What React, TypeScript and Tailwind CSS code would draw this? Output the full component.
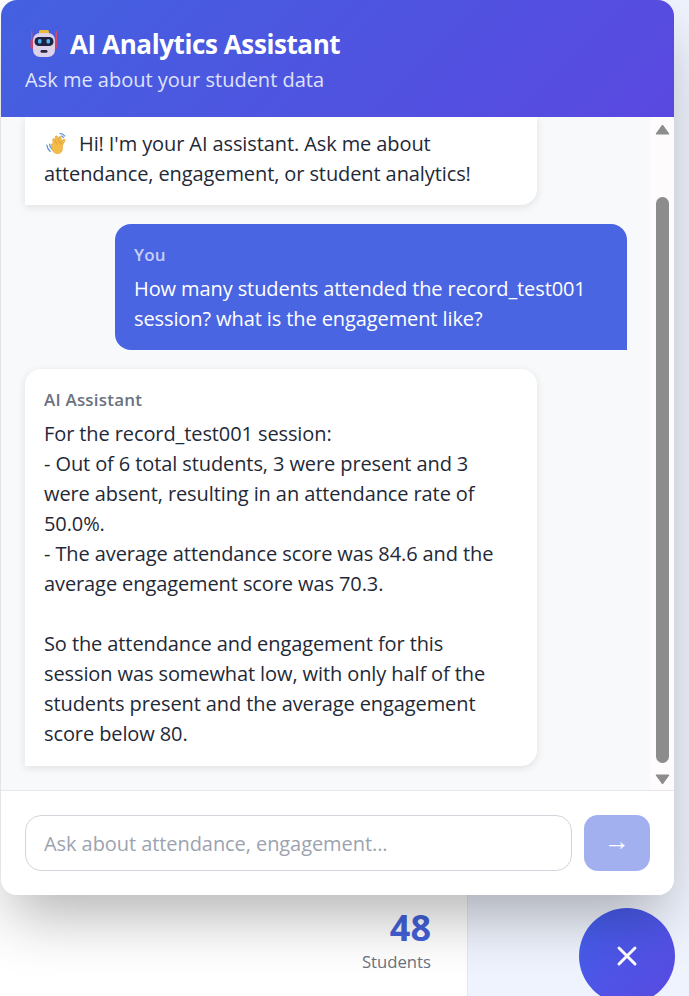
import { X } from 'lucide-react'

function BotIcon() {
  return (
    <svg width="28" height="28" viewBox="0 0 28 28" className="shrink-0">
      <rect x="1" y="1" width="1.300" height="16" rx=".6" fill="#e0486e" />
      <rect x="25.700" y="1" width="1.300" height="16" rx=".6" fill="#e0486e" />
      <rect x="0.500" y="9" width="3" height="10" rx="1.500" fill="#c9436b" />
      <rect x="24.500" y="9" width="3" height="10" rx="1.500" fill="#c9436b" />
      <rect x="9" y="0" width="10" height="4" rx="1.500" fill="#e8b93a" />
      <rect x="3" y="3" width="22" height="24" rx="7" fill="#dcd2ea" />
      <rect x="4.500" y="7" width="19" height="9" rx="4.300" fill="#1d2340" />
      <rect x="8" y="9" width="3.500" height="4.500" rx="1.500" fill="#4fb4f2" />
      <rect x="16.500" y="9" width="3.500" height="4.500" rx="1.500" fill="#4fb4f2" />
      <rect x="10.500" y="20" width="7" height="2.800" rx="1.400" fill="#2a2440" />
    </svg>
  )
}

function WaveIcon() {
  return (
    <svg width="24" height="24" viewBox="0 0 24 24" className="inline-block align-[-5px] mr-[10px]">
      <path d="M4.500 12c.2 2 1 3.500 2.300 4.800M1.800 13c.3 2.600 1.500 4.700 3.300 6.300" fill="none" stroke="#4f8fd8" strokeWidth="1.200" strokeLinecap="round" />
      <path d="M15 1.500c2 .1 3.700 1 4.800 2.500M16 4c1 .1 1.800.6 2.400 1.300" fill="none" stroke="#4f8fd8" strokeWidth="1.200" strokeLinecap="round" />
      <path d="M8 11.500 7.600 8C7.400 6.500 9.400 6 10 7.400l.5 1.200L10.200 5.200c-.1-1.600 2-2 2.600-.4l.8 2.400.2-1.600c.2-1.500 2.200-1.500 2.400.1l.2 3.600 1.700-1.900c1-1.100 2.700.1 1.900 1.400l-2.300 4.500-.3 4.300c-.2 2.800-2.500 4.400-5.200 4.100-2.800-.3-4.700-2-5.300-4.700L6 13.500c-.3-1.300.8-2.200 2-2Z" fill="#f2bb4a" stroke="#e2a232" strokeWidth=".5" />
      <path d="M10.500 8.600 11.500 12M13.600 7.200 14.200 11M16.400 9.300 16 12" fill="none" stroke="#d8962a" strokeWidth=".7" strokeLinecap="round" />
    </svg>
  )
}

function ScrollStrip() {
  return (
    <div className="w-6 shrink-0 bg-[#fdfbfb] flex flex-col items-center pt-[7px] pb-[5px]">
      <svg width="15" height="11" viewBox="0 0 15 11">
        <path d="M7.500 1 14 10H1Z" fill="#8c8c8c" stroke="#8c8c8c" strokeLinejoin="round" />
      </svg>
      <div className="w-[13px] bg-[#8c8c8c] rounded-full mt-[62px] h-[566px]" />
      <div className="flex-1" />
      <svg width="15" height="11" viewBox="0 0 15 11">
        <path d="M7.500 10 14 1H1Z" fill="#8c8c8c" stroke="#8c8c8c" strokeLinejoin="round" />
      </svg>
    </div>
  )
}

export default function App() {
  return (
    <div className="relative w-[689px] h-[996px] overflow-hidden bg-[#eff3fd] font-['Open_Sans',sans-serif]">
      {/* tarjeta de fondo */}
      <div className="absolute left-0 top-0 w-[468px] h-full bg-white border-r border-[#e5e7eb] flex flex-col items-end justify-end pr-9 pb-[22px]">
        <div className="text-[36px] leading-[42px] font-bold text-[#4361d8]">48</div>
        <div className="text-[16.700px] leading-[24px] text-[#6b7280] mt-[1px]">Students</div>
      </div>

      <button className="absolute left-[579px] top-[908px] w-24 h-24 rounded-full bg-[linear-gradient(135deg,#4361ee,#5a48e0)] flex items-center justify-center text-white">
        <X size={32} strokeWidth={2.25} />
      </button>

      {/* Panel del chat */}
      <div className="absolute left-[1px] top-0 w-[673px] h-[895px] bg-white rounded-2xl overflow-hidden shadow-[0_30px_60px_-10px_rgba(0,0,0,0.3)] flex flex-col">
        <div className="h-[117px] shrink-0 bg-[linear-gradient(135deg,#4361e0,#5a48e0)] text-white pl-6 pt-[26px]">
          <div className="flex items-center gap-[12px] text-[26px] leading-[36px] font-bold tracking-[-0.4px] pl-[5px]">
            <BotIcon />
            <span>AI Analytics Assistant</span>
          </div>
          <div className="text-[20px] leading-[30px] mt-[3px] text-[#dfe3fb]">Ask me about your student data</div>
        </div>

        <div className="flex-1 min-h-0 flex bg-[#f8f9fb] border-b border-[#e5e7eb]">
          <div className="flex-1 min-w-0 flex flex-col gap-[19px] pl-6 pr-[23px] overflow-hidden text-[20px] leading-[30px] text-[#1f2937] tracking-[-0.1px]">
            <div className="w-[512px] bg-white rounded-br-2xl px-[19px] pt-[12px] pb-[16px] shadow-[0_2px_8px_rgba(0,0,0,0.1)]">
              <span className="pl-[1px]"><WaveIcon /></span>Hi! I'm your AI assistant. Ask me about
              <br />
              attendance, engagement, or student analytics!
            </div>

            <div className="w-[512px] self-end bg-[#4a65e2] rounded-2xl rounded-br-none px-[19px] pt-[19px] pb-[16px] text-white">
              <div className="text-[17px] leading-[24px] tracking-[0.2px] font-semibold text-[#c6cef5] mb-[7px]">You</div>
              How many students attended the record_test001
              <br />
              session? what is the engagement like?
            </div>

            <div className="w-[512px] bg-white rounded-2xl rounded-bl-none px-[19px] pt-[19px] pb-[17px] shadow-[0_2px_8px_rgba(0,0,0,0.1)]">
              <div className="text-[17px] leading-[24px] tracking-[0.2px] font-semibold text-[#6b7280] mb-[7px]">AI Assistant</div>
              For the record_test001 session:
              <br />- Out of 6 total students, 3 were present and 3
              <br />
              were absent, resulting in an attendance rate of
              <br />
              50.0%.
              <br />- The average attendance score was 84.6 and the
              <br />
              average engagement score was 70.3.
              <br />
              <br />
              So the attendance and engagement for this
              <br />
              session was somewhat low, with only half of the
              <br />
              students present and the average engagement
              <br />
              score below 80.
            </div>
          </div>
          <ScrollStrip />
        </div>

        <div className="shrink-0 flex gap-3 pl-6 pr-6 pt-6 pb-6 bg-white">
          <input
            placeholder="Ask about attendance, engagement..."
            className="w-[547px] h-14 rounded-2xl border border-[#d1d5db] px-[18px] text-[20px] tracking-[-0.07px] placeholder:text-[#9ca3af] bg-white outline-none"
          />
          <button className="w-[66px] h-14 rounded-[14px] bg-[#a3b0f0] text-white text-[26px] flex items-center justify-center pb-[6px]">→</button>
        </div>
      </div>
    </div>
  )
}
